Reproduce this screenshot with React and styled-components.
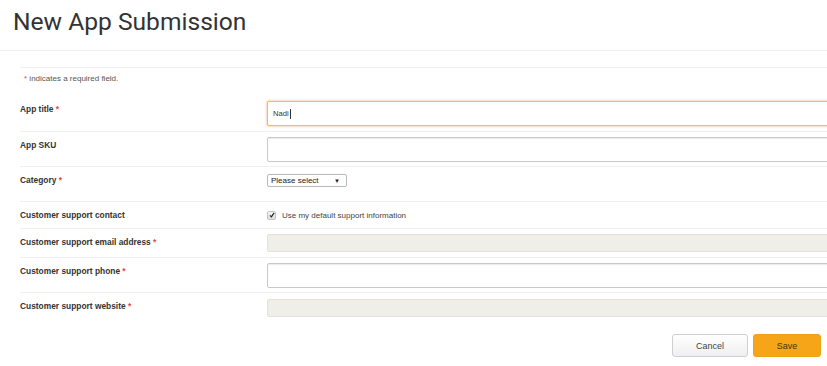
import React from 'react';
import styled, { createGlobalStyle } from 'styled-components';

const GlobalStyle = createGlobalStyle`
  html, body {
    margin: 0;
    padding: 0;
    background: #fff;
    overflow: hidden;
  }
  body {
    font-family: "Liberation Sans", Arial, sans-serif;
    color: #333;
  }
`;

// styled-components
const Page = styled.div`
  width: 827px;
  height: 366px;
  overflow: hidden;
`;

const Header = styled.div`
  box-sizing: border-box;
  height: 51px;
  padding: 8px 0 0 13px;
  border-bottom: 1px solid #efefef;
`;

const Title = styled.h1`
  margin: 0;
  font-family: Roboto, "Liberation Sans", sans-serif;
  font-weight: 400;
  font-size: 24.6px;
  line-height: 28px;
  color: #333;
`;

const Form = styled.div`
  margin: 16px 0 0 20px;
  border-top: 1px solid #efefef;
`;

const Note = styled.div`
  padding: 6px 0 0 4px;
  height: 22px;
  font-size: 8px;
  line-height: 10px;
  color: #555;
`;

const Req = styled.span`
  color: #e04848;
`;

const Row = styled.div`
  display: grid;
  grid-template-columns: 247px 1fr;
  min-height: ${(p) => p.$h}px;
  box-sizing: border-box;
  border-bottom: ${(p) => (p.$last ? 'none' : '1px solid #efefef')};
`;

const Label = styled.div`
  padding-top: 8px;
  font-size: 8.4px;
  font-weight: 700;
  line-height: 10px;
  color: #333;
`;

const Field = styled.div`
  padding-top: ${(p) => p.$top}px;
`;

const Input = styled.div`
  box-sizing: border-box;
  width: 600px;
  height: ${(p) => (p.$disabled ? 18 : 25)}px;
  border: 1px solid ${(p) => (p.$focus ? '#e9bf5a' : p.$disabled ? '#e2e1dc' : '#c9c9c9')};
  border-radius: 2px;
  background: ${(p) => (p.$disabled ? '#efeee9' : '#fff')};
  box-shadow: ${(p) =>
    p.$focus
      ? '0 0 2px 1px rgba(248, 190, 150, 0.6)'
      : p.$disabled
      ? 'none'
      : 'inset 0 1px 1px rgba(0,0,0,0.08)'};
  padding-left: 5px;
  font-size: 7.6px;
  line-height: 23px;
  color: #333;
  display: flex;
  align-items: center;
`;

const Caret = styled.span`
  display: inline-block;
  width: 1px;
  height: 10px;
  background: #333;
  margin-left: 1px;
`;

const Select = styled.div`
  box-sizing: border-box;
  width: 80px;
  height: 13px;
  border: 1px solid #b9b9b9;
  border-radius: 2px;
  background: #fff;
  display: flex;
  align-items: center;
  justify-content: space-between;
  padding: 0 6px 0 3px;
  font-size: 8px;
  color: #222;
`;

const Arrow = styled.span`
  font-size: 6px;
  color: #222;
`;

const CheckLine = styled.div`
  display: flex;
  align-items: center;
  gap: 6px;
  height: 10px;
  font-size: 8px;
  color: #444;
`;

const Box = styled.span`
  box-sizing: border-box;
  width: 9px;
  height: 9px;
  border: 1px solid #c4c4c4;
  border-radius: 2px;
  background: linear-gradient(#f6f6f6, #dcdcdc);
  display: flex;
  align-items: center;
  justify-content: center;
`;

const Actions = styled.div`
  display: flex;
  justify-content: flex-end;
  gap: 5px;
  padding: 15px 6px 0 0;
`;

const Button = styled.button`
  box-sizing: border-box;
  width: ${(p) => p.$w}px;
  height: 23px;
  border-radius: 3px;
  font-family: "Liberation Sans", Arial, sans-serif;
  font-size: 9px;
  cursor: pointer;
  border: 1px solid ${(p) => (p.$primary ? '#eea21a' : '#cfcfcf')};
  background: ${(p) =>
    p.$primary ? '#f5a517' : 'linear-gradient(#ffffff, #efeff1)'};
  color: ${(p) => (p.$primary ? '#4a3200' : '#444')};
`;

const rows = [
  { label: 'App title', req: true, h: 36, top: 5, kind: 'focus' },
  { label: 'App SKU', h: 35, top: 5, kind: 'input' },
  { label: 'Category', req: true, h: 35, top: 7, kind: 'select' },
  { label: 'Customer support contact', h: 27, top: 8, kind: 'check' },
  { label: 'Customer support email address', req: true, h: 29, top: 5, kind: 'disabled' },
  { label: 'Customer support phone', req: true, h: 35, top: 5, kind: 'input' },
  { label: 'Customer support website', req: true, h: 26, top: 6, kind: 'disabled', last: true },
];

const renderField = (kind) => {
  if (kind === 'focus') {
    return (
      <Input $focus>
        Nadi
        <Caret />
      </Input>
    );
  }
  if (kind === 'input') return <Input />;
  if (kind === 'disabled') return <Input $disabled />;
  if (kind === 'select') {
    return (
      <Select>
        Please select
        <Arrow>▼</Arrow>
      </Select>
    );
  }
  return (
    <CheckLine>
      <Box>
        <svg width="6" height="6" viewBox="0 0 10 10">
          <path d="M1.5 5.5 L4 8 L8.5 1.5" fill="none" stroke="#222" strokeWidth="2" />
        </svg>
      </Box>
      Use my default support information
    </CheckLine>
  );
};

const App = () => {
  return (
    <Page>
      <GlobalStyle />
      <Header>
        <Title>New App Submission</Title>
      </Header>
      <Form>
        <Note>
          <Req>*</Req> indicates a required field.
        </Note>
        {rows.map((r) => (
          <Row key={r.label} $h={r.h} $last={r.last}>
            <Label>
              {r.label}
              {r.req ? <Req> *</Req> : null}
            </Label>
            <Field $top={r.top}>{renderField(r.kind)}</Field>
          </Row>
        ))}
        <Actions>
          <Button $w={76}>Cancel</Button>
          <Button $w={68} $primary>
            Save
          </Button>
        </Actions>
      </Form>
    </Page>
  );
};

export default App;
